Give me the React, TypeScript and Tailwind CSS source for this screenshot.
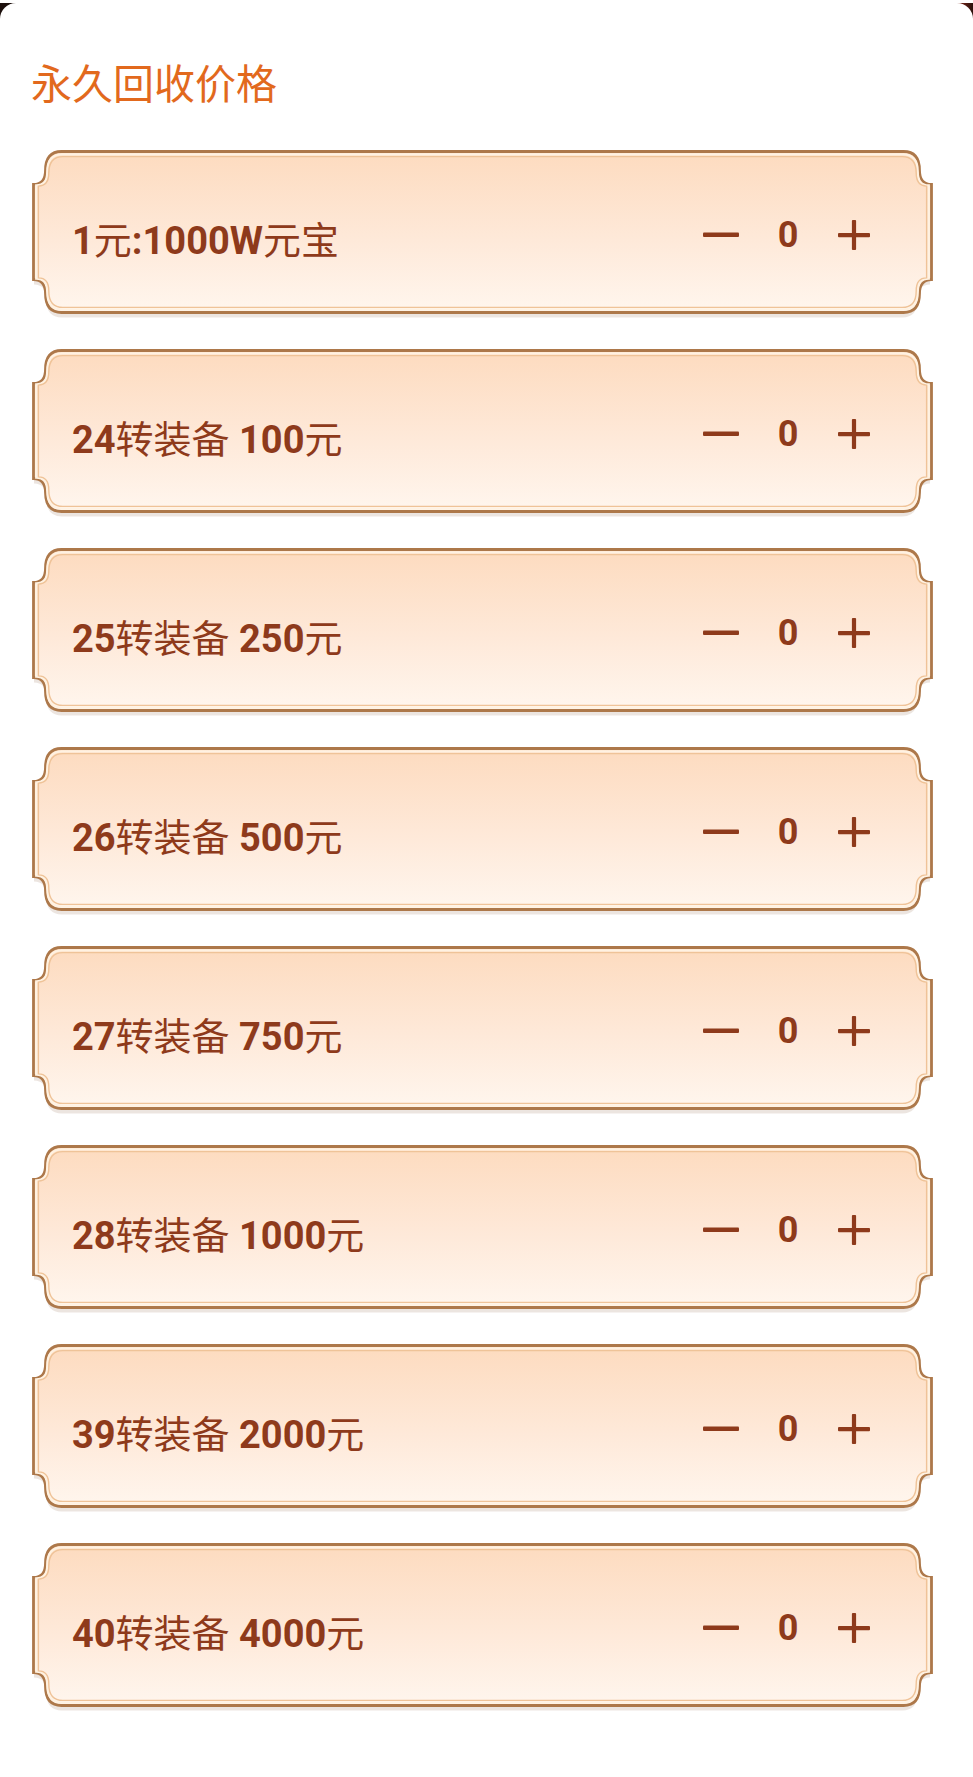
import React from "react";

const items = [
  "1元:1000W元宝",
  "24转装备 100元",
  "25转装备 250元",
  "26转装备 500元",
  "27转装备 750元",
  "28转装备 1000元",
  "39转装备 2000元",
  "40转装备 4000元",
];

function framePath(x0: number, y0: number, x1: number, y1: number, A: number, B: number, C: number, E: number) {
  return [
    `M ${x0 + A} ${y0}`,
    `H ${x1 - A}`,
    `Q ${x1 - B} ${y0} ${x1 - B} ${y0 + C}`,
    `Q ${x1 - B} ${y0 + E} ${x1} ${y0 + E}`,
    `V ${y1 - E}`,
    `Q ${x1 - B} ${y1 - E} ${x1 - B} ${y1 - C}`,
    `Q ${x1 - B} ${y1} ${x1 - A} ${y1}`,
    `H ${x0 + A}`,
    `Q ${x0 + B} ${y1} ${x0 + B} ${y1 - C}`,
    `Q ${x0 + B} ${y1 - E} ${x0} ${y1 - E}`,
    `V ${y0 + E}`,
    `Q ${x0 + B} ${y0 + E} ${x0 + B} ${y0 + C}`,
    `Q ${x0 + B} ${y0} ${x0 + A} ${y0}`,
    "Z",
  ].join(" ");
}

const W = 902;
const H = 164;

function Frame({ id }: { id: number }) {
  const gid = `g${id}`;
  return (
    <svg
      className="absolute left-0 top-0 pointer-events-none"
      width={W}
      height={H + 8}
      viewBox={`0 0 ${W} ${H + 8}`}
    >
      <defs>
        <linearGradient id={gid} x1="0" y1="0" x2="0" y2="1">
          <stop offset="0" stopColor="#fddbbf" />
          <stop offset="0.55" stopColor="#fee9d9" />
          <stop offset="1" stopColor="#fff6ee" />
        </linearGradient>
      </defs>
      <path d={framePath(3, 5, W - 3, H + 3.5, 28, 12, 19, 33)} fill="#bfa898" opacity="0.3" />
      <path
        d={framePath(2.5, 1.5, W - 1.5, H - 1.5, 28, 12, 19, 33)}
        fill={`url(#${gid})`}
        stroke="#ad784a"
        strokeWidth="2.8"
      />
      <path
        d={framePath(5.2, 4.4, W - 4.2, H - 4.4, 26, 11, 17.5, 31)}
        fill="none"
        stroke="#fff2e2"
        strokeWidth="2.2"
      />
      <path
        d={framePath(7.4, 6.6, W - 6.4, H - 6.6, 24.5, 10.4, 16.5, 29.5)}
        fill="none"
        stroke="#efc398"
        strokeWidth="1.4"
      />
    </svg>
  );
}

function Label({ text }: { text: string }) {
  const parts = text.match(/[\u4e00-\u9fff]+|[^\u4e00-\u9fff]+/g) || [];
  return (
    <span className="text-[38px] leading-[46px] text-[#8e3a1b] whitespace-pre">
      {parts.map((p, i) =>
        /[\u4e00-\u9fff]/.test(p) ? (
          <span key={i} className="font-normal font-[family-name:'Noto_Sans_CJK_SC',sans-serif]">
            {p}
          </span>
        ) : (
          <span key={i} className="font-bold font-[family-name:Roboto,sans-serif]">
            {p}
          </span>
        )
      )}
    </span>
  );
}

function Card({ text, id }: { text: string; id: number }) {
  return (
    <div className="relative w-[902px] h-[164px]">
      <Frame id={id} />
      <div className="relative h-full flex items-center justify-between pl-[41px] pr-[63px]">
        <div className="mt-[14px]">
          <Label text={text} />
        </div>
        <div className="flex items-center mt-[5px]">
          <svg width="36" height="6" viewBox="0 0 36 6" className="block">
            <rect x="0" y="0.5" width="36" height="4.6" rx="1" fill="#8e3a1b" />
          </svg>
          <span className="ml-[38px] w-[22px] text-center text-[36px] leading-[40px] font-bold text-[#8e3a1b] font-[family-name:Roboto,sans-serif]">
            0
          </span>
          <svg width="32" height="30" viewBox="0 0 32 30" className="block ml-[39px]">
            <rect x="0" y="13" width="32" height="4.2" rx="1" fill="#8e3a1b" />
            <rect x="13.9" y="0" width="4.2" height="30" rx="1" fill="#8e3a1b" />
          </svg>
        </div>
      </div>
    </div>
  );
}

export default function App() {
  return (
    <div className="w-[973px] min-h-[1777px] bg-[linear-gradient(90deg,#1c0f0c_0%,#2a1410_40%,#3a1a12_80%,#c8401c_88%,#2a110d_92%,#d13a22_97%,#2a110d_100%)]">
      <div className="mt-[3px] min-h-[1774px] bg-white rounded-t-[16px] pl-[31px] pt-[54px] pb-[70px]">
        <h2 className="text-[41px] leading-[48px] font-normal text-[#e2691d] font-[family-name:'Noto_Sans_CJK_SC',sans-serif]">
          永久回收价格
        </h2>
        <div className="mt-[45px] flex flex-col gap-[35px]">
          {items.map((t, i) => (
            <Card key={i} text={t} id={i} />
          ))}
        </div>
      </div>
    </div>
  );
}
